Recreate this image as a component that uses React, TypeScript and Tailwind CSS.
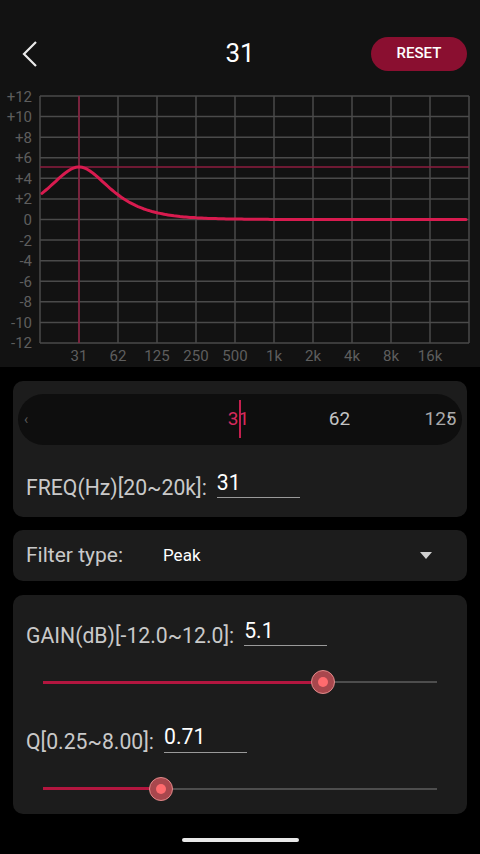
import React from "react";

const FONT = { fontFamily: "Roboto, 'Noto Sans', sans-serif" };

const RED = "#d81b4f";

// graph geometry (svg coords)
const LEFT = 40;
const COL = 39;
const TOP = 11;
const ROW = 20.58;
const RIGHT = LEFT + COL * 11;
const BOTTOM = TOP + ROW * 12;
const ZERO = TOP + ROW * 6;

function peakDb(f: number, f0: number, gain: number, q: number) {
  const a = Math.pow(10, gain / 40);
  const w = f / f0;
  const r = (1 - w * w) ** 2;
  const num = r + (w * a / q) ** 2;
  const den = r + (w / (a * q)) ** 2;
  return 10 * Math.log10(num / den);
}

function curvePath() {
  const pts: string[] = [];
  for (let x = LEFT + 2; x <= RIGHT - 2; x += 2) {
    const f = 31 * Math.pow(2, (x - (LEFT + COL)) / COL);
    const db = peakDb(f, 31, 5.1, 0.71);
    const y = ZERO - (db / 2) * ROW;
    pts.push(`${pts.length ? "L" : "M"}${x.toFixed(1)} ${y.toFixed(1)}`);
  }
  return pts.join(" ");
}

function Graph() {
  const yLabels = ["+12", "+10", "+8", "+6", "+4", "+2", "0", "-2", "-4", "-6", "-8", "-10", "-12"];
  const xLabels = ["31", "62", "125", "250", "500", "1k", "2k", "4k", "8k", "16k"];
  const gainY = ZERO - (5.1 / 2) * ROW;
  return (
    <svg width="480" height="282" viewBox="0 0 480 282" className="block">
      {Array.from({ length: 12 }).map((_, i) => (
        <line key={"v" + i} x1={LEFT + i * COL} x2={LEFT + i * COL} y1={TOP} y2={BOTTOM} stroke="#4a4a4a" strokeWidth="1.5" />
      ))}
      {Array.from({ length: 13 }).map((_, i) => (
        <line key={"h" + i} x1={LEFT} x2={RIGHT} y1={TOP + i * ROW} y2={TOP + i * ROW} stroke="#4a4a4a" strokeWidth="1.5" />
      ))}
      <line x1={LEFT + COL} x2={LEFT + COL} y1={TOP} y2={BOTTOM} stroke="#8e1d3f" strokeWidth="1.5" />
      <line x1={LEFT} x2={RIGHT} y1={gainY} y2={gainY} stroke="#8e1d3f" strokeWidth="1.5" />
      <path d={curvePath()} fill="none" stroke={RED} strokeWidth="3" strokeLinecap="round" />
      {yLabels.map((l, i) => (
        <text key={l} x="32" y={TOP + i * ROW + 5.5} textAnchor="end" fill="#5e5e5e" fontSize="15" style={FONT}>
          {l}
        </text>
      ))}
      {xLabels.map((l, i) => (
        <text key={l} x={LEFT + (i + 1) * COL} y="276" textAnchor="middle" fill="#5e5e5e" fontSize="15" style={FONT}>
          {l}
        </text>
      ))}
    </svg>
  );
}

function Field({ label, value }: { label: string; value: string }) {
  return (
    <div className="flex items-end text-[21.2px] leading-none">
      <span className="text-[#c9c9c9]">{label}</span>
      <div className="ml-[10px] w-[83px] border-b-[1.5px] border-[#9a9a9a] pb-[4px] text-white">{value}</div>
    </div>
  );
}

function Slider({ pos }: { pos: number }) {
  return (
    <div className="relative mx-[30px] h-[24px]">
      <div className="absolute left-0 right-0 top-[11px] h-[2px] bg-[#4d4d4d]" />
      <div className="absolute left-0 top-[10.5px] h-[3px] bg-[#b3163f]" style={{ width: pos }} />
      <div
        className="absolute top-0 flex h-[24px] w-[24px] items-center justify-center rounded-full border-[1.5px] border-[#e08a8a] bg-[#a8474d]"
        style={{ left: pos - 12 }}
      >
        <div className="h-[10px] w-[10px] rounded-full bg-[#ff6b6e]" />
      </div>
    </div>
  );
}

export default function App() {
  return (
    <div className="flex h-[854px] w-[480px] flex-col overflow-hidden bg-black" style={FONT}>
      <div className="bg-[#121212]">
        <div className="flex h-[85px] items-center pt-[22px]">
          <div className="flex w-[60px] justify-center">
            <svg width="18" height="28" viewBox="0 0 18 28">
              <path d="M15 2 L3 14 L15 26" fill="none" stroke="#eaeaea" strokeWidth="2.2" />
            </svg>
          </div>
          <div className="flex-1 pl-[49px] text-center text-[26px] text-white">31</div>
          <button className="mr-[13px] h-[34px] w-[96px] rounded-full bg-[#8a0f30] text-[15px] font-medium text-white">
            RESET
          </button>
        </div>
        <Graph />
      </div>

      <div className="mx-[13px] mt-[14px] rounded-[10px] bg-[#1c1c1c] pb-[19px] pt-[13px]">
        <div className="relative mx-[5px] flex h-[51px] items-center rounded-full bg-[#0e0e0e] text-[19px]">
          <span className="absolute left-[6px] top-[15px] text-[14px] text-[#5a5a5a]">‹</span>
          <div className="absolute left-[221px] top-[6px] h-[38px] w-[1.5px] bg-[#c4204f]" />
          <div className="flex pl-[170px]">
            <div className="w-[101px] text-center text-[#d52a5c]">31</div>
            <div className="w-[101px] text-center text-[#c4c4c4]">62</div>
            <div className="w-[101px] text-center text-[#a8a8a8]">125</div>
          </div>
          <span className="absolute left-[429px] top-[12px] text-[16px] text-[#d0d0d0]">›</span>
        </div>
        <div className="mt-[27px] px-[13px]">
          <Field label="FREQ(Hz)[20~20k]:" value="31" />
        </div>
      </div>

      <div className="mx-[13px] mt-[13px] flex h-[51px] items-center rounded-[10px] bg-[#1c1c1c] px-[13px] text-[21px]">
        <span className="w-[137px] text-[#c9c9c9]">Filter type:</span>
        <span className="flex-1 text-[17px] text-white">Peak</span>
        <svg width="12" height="7" viewBox="0 0 12 7" className="mr-[22px]">
          <path d="M0 0 L12 0 L6 7 Z" fill="#d0d0d0" />
        </svg>
      </div>

      <div className="mx-[13px] mt-[14px] rounded-[10px] bg-[#1c1c1c] pb-[13px] pt-[25px]">
        <div className="px-[13px]">
          <Field label="GAIN(dB)[-12.0~12.0]:" value="5.1" />
        </div>
        <div className="mt-[24px]">
          <Slider pos={280} />
        </div>
        <div className="mt-[32px] px-[13px]">
          <Field label="Q[0.25~8.00]:" value="0.71" />
        </div>
        <div className="mt-[24px]">
          <Slider pos={118} />
        </div>
      </div>

      <div className="mt-[24px] flex justify-center">
        <div className="h-[4px] w-[117px] rounded-full bg-[#e8e8e8]" />
      </div>
    </div>
  );
}
